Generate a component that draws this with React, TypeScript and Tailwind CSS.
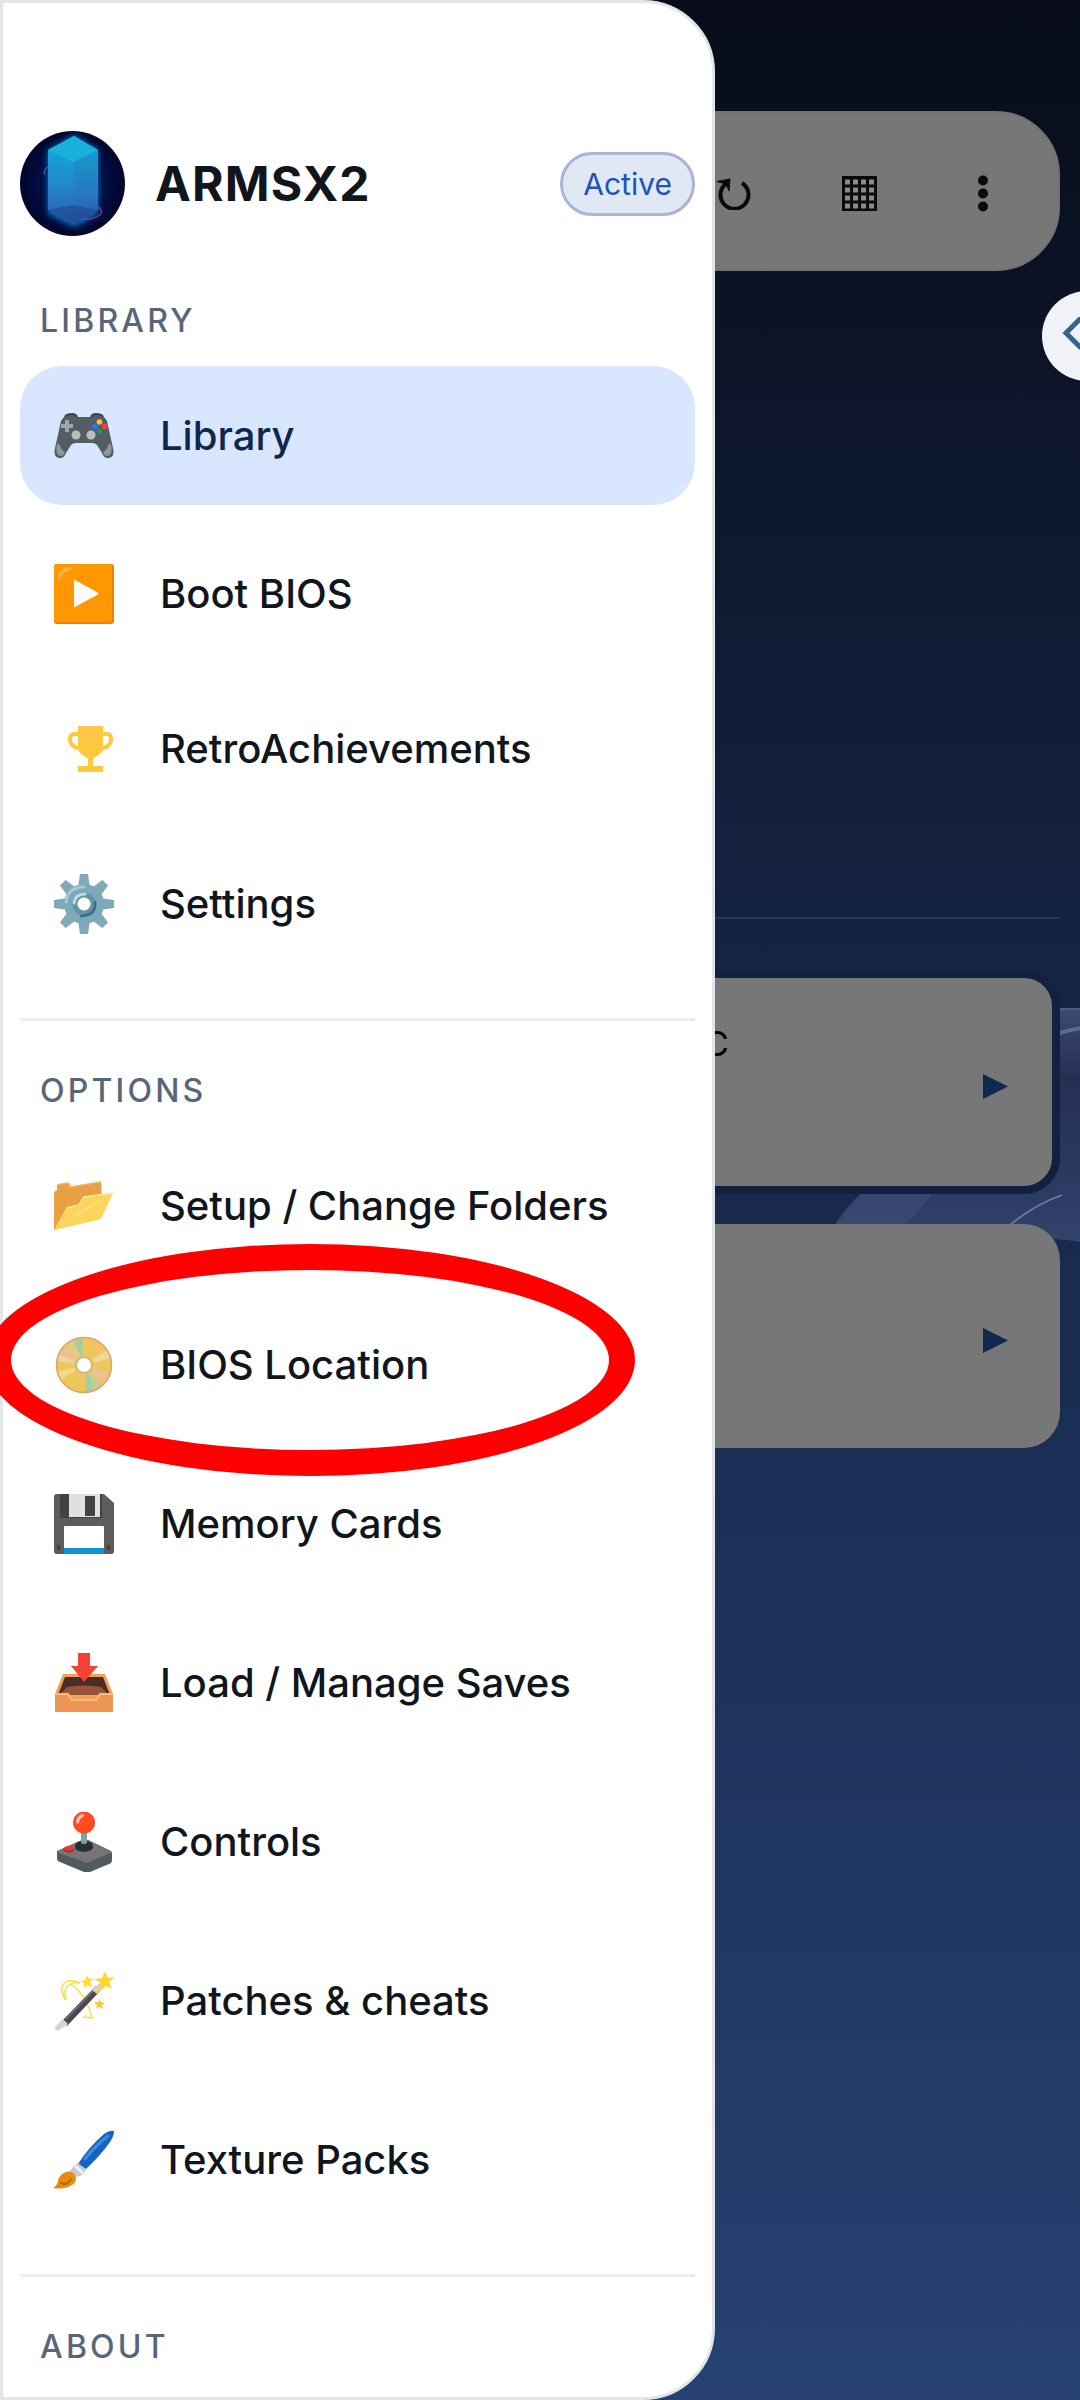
import type { ReactNode } from 'react';

function Icon({ children }: { children: ReactNode }) {
  return (
    <svg viewBox="0 0 60 60" className="size-[60px] shrink-0" aria-hidden="true">
      {children}
    </svg>
  );
}

const gamepad = (
  <Icon>
    <path d="M12 10q1-2 6-2 4 0 5 3h14q1-3 5-3 5 0 6 2 4 2 5 5l6 27q2 9-4 10-5 1-7-5l-5-8q-2-2-5-2H22q-3 0-5 2l-5 8q-2 6-7 5-6-1-4-10L7 15q1-3 5-5Z" fill="#545d63" />
    <path d="M11 11q1-3 7-3 4 0 5 3M37 11q1-3 5-3 6 0 7 3" fill="none" stroke="#3e464b" strokeWidth="2" />
    <path d="M3 38q2-1 3 2 1 4 5 6-1 4-5 4-5-2-3-12ZM57 38q-2-1-3 2-1 4-5 6 1 4 5 4 5-2 3-12Z" fill="#8f979c" />
    <path d="M11 14h4v4h4v4h-4v4h-4v-4H7v-4h4Z" fill="#a2a6a8" />
    <circle cx="22" cy="29" r="4.500" fill="#bdbdbd" />
    <circle cx="37" cy="29" r="4.500" fill="#bdbdbd" />
    <circle cx="45.500" cy="16" r="2.800" fill="#fbc02d" />
    <circle cx="41" cy="20.500" r="2.800" fill="#2979ff" />
    <circle cx="50.500" cy="20.500" r="2.800" fill="#f44336" />
    <circle cx="45.500" cy="25" r="2.600" fill="#0f9d58" />
  </Icon>
);

const play = (
  <Icon>
    <rect width="60" height="60" rx="3" fill="#f57c00" />
    <rect width="58" height="58" rx="3" fill="#ff9800" />
    <path d="M4 14Q4 4 15 3q4 0 2 3-9 1-11 10-2 1-2-2Z" fill="#ffbd52" opacity=".8" />
    <path d="M20 15.500 43 28q2 1.500 0 3L20 43.500Z" fill="#fafafa" />
  </Icon>
);

const trophy = (
  <svg viewBox="0 0 45 46" className="ml-[14px] mr-px h-[46px] w-[45px] shrink-0" aria-hidden="true">
    <path d="M11 8H6Q2 8 2 13q0 8 11 10M34 8h5q4 0 4 5 0 8-11 10" fill="none" stroke="#ffc93c" strokeWidth="4" />
    <path d="M10 0h25v20q0 7-6 10-4 2-4 4v6h10v6H10v-6h10v-6q0-2-4-4-6-3-6-10Z" fill="#ffc93c" />
    <path d="M13 0h19v15H13Z" fill="#ffc44a" />
  </svg>
);

const gear = (
  <Icon>
    <g fill="#82a9b8">
      <path d="m26 0h8l2 14H24ZM26 60h8l2-14H24ZM0 26v8l14 2V24ZM60 26v8l-14 2V24Z" />
      <path d="m26 0h8l2 14H24ZM26 60h8l2-14H24ZM0 26v8l14 2V24ZM60 26v8l-14 2V24Z" transform="rotate(45 30 30)" />
    </g>
    <path d="M30 10a20 20 0 1 0 .1 0ZM30 24a6 6 0 1 1-.1 0Z" fill="#7ba9ba" fillRule="evenodd" />
    <path d="M12 28Q14 13 30 13" fill="none" stroke="#a5cbd5" strokeWidth="3" strokeLinecap="round" />
    <circle cx="30" cy="30" r="9" fill="none" stroke="#6494a6" strokeWidth="5" />
    <path d="M20 29q1-9 11-9" fill="none" stroke="#bddde4" strokeWidth="3" strokeLinecap="round" />
    <path d="M41 28q2 13-14 14" fill="none" stroke="#386f82" strokeWidth="2.500" strokeLinecap="round" />
    <circle cx="30" cy="30" r="6.500" fill="#fff" />
  </Icon>
);

const folder = (
  <Icon>
    <path d="M0 18q0-3 3-4V9l10-2q3 0 3 4l31-5 1 16L12 50 0 54Z" fill="#e7a043" />
    <path d="M3 9 13 7q3 0 3 4l31-5" fill="none" stroke="#f0b75e" strokeWidth="1.500" />
    <path d="m0 54 12-22 13-3 5-8 29-4-10 22q-1 4-5 5Z" fill="#fbd55c" />
    <path d="m12 32 13-3 5-8 29-4" fill="none" stroke="#ffe998" strokeWidth="1.500" />
    <path d="m20 40 30-17" stroke="#ffe27c" strokeWidth="3" opacity=".6" />
  </Icon>
);

const disc = (
  <Icon>
    <circle cx="30" cy="30" r="28" fill="#eec75b" />
    <g opacity=".85">
      <path d="M30 30 12 9l8-5Z" fill="#dcd08a" />
      <path d="M30 30 19 4l9-2Z" fill="#9bcdab" />
      <path d="M30 30 3 22l8-12Z" fill="#f0bf9b" />
      <path d="M30 30 2 26l2-7Z" fill="#ead6ac" />
      <path d="m30 30 18 21-8 5Z" fill="#b5d2a0" />
      <path d="m30 30 11 26-9 2Z" fill="#9bcdab" />
      <path d="m30 30 27 8-7 11Z" fill="#f0bf9b" />
      <path d="m30 30 28-7-5-8Z" fill="#ecdba7" />
      <path d="m30 30-27 7 4 8Z" fill="#f5dd88" />
    </g>
    <circle cx="30" cy="30" r="27.500" fill="none" stroke="#dfa368" strokeWidth="1.500" />
    <circle cx="30" cy="30" r="9.500" fill="#d8b464" stroke="#e6c480" strokeWidth="1.500" />
    <circle cx="30" cy="30" r="7" fill="#fff" />
  </Icon>
);

const floppy = (
  <Icon>
    <path d="M3 0h47l10 9v48q0 3-3 3H3q-3 0-3-3V3q0-3 3-3Z" fill="#5c5c5c" />
    <path d="M6 0h42v24H6Z" fill="#424242" />
    <path d="M15 0h31v23H15Z" fill="#e0e0e0" />
    <path d="M31 2h10v20H31Z" fill="#424242" />
    <path d="M10 33q0-1 1-1h38q1 0 1 1v22H10Z" fill="#fff" />
    <path d="M10 54h40v6H10Z" fill="#0f92d6" />
    <path d="M3 51h3v5H3ZM53 51h3v5h-3Z" fill="#424242" />
  </Icon>
);

const inbox = (
  <Icon>
    <path d="M9 21h42l8 20v18H1V41Z" fill="#efa255" />
    <path d="M11 24h38l7 18H4Z" fill="#4b2c27" />
    <path d="M13 34q17-3 34 0l8 8H5Z" fill="#965539" />
    <path d="M1 41h13l4 6h24l4-6h13v18H1Z" fill="#ee9656" />
    <path d="M1 41h13l4 6h24l4-6h13" fill="none" stroke="#ffbd73" strokeWidth="2" />
    <path d="M24 0h12v13h8L30 29 17 13h7Z" fill="#f44336" />
  </Icon>
);

const joystick = (
  <Icon>
    <path d="m3 39 25-11q3-1 6 0l23 11q1 1 1 3v6q0 3-3 4L36 60q-3 1-6 0L6 50q-3-1-3-4Z" fill="#515b5f" />
    <path d="m4 39 25-11q2-1 5 0l22 11q2 1 0 2L35 50q-3 1-5 0L5 41q-2-1-1-2Z" fill="#757575" />
    <ellipse cx="30" cy="35" rx="9" ry="5" fill="#263035" />
    <path d="M22 31q8-5 16 0l1 4H21Z" fill="#263035" />
    <path d="M27 19h6v12q-3 2-6 0Z" fill="#75a5a4" />
    <circle cx="30" cy="10.500" r="11" fill="#ff4b20" />
    <path d="M22 10q0-6 6-8 3 0 1 3-4 2-4 6-2 2-3-1Z" fill="#ffc3b5" />
    <ellipse cx="15" cy="37.500" rx="5.500" ry="3" fill="#b71c1c" />
    <ellipse cx="15" cy="36.500" rx="5" ry="2.500" fill="#e53935" />
  </Icon>
);

const wand = (
  <Icon>
    <path d="M26 12Q12 6 8 16q-1 7 4 13Q9 18 15 14q4-3 11-2ZM17 13q16 12 21 34l-9-1" fill="none" stroke="#f5e23b" strokeWidth="1.500" />
    <path d="m8 50 34-35 5 4-34 36Z" fill="#4b4852" />
    <path d="m12 48 31-32" stroke="#77727d" strokeWidth="1.500" />
    <path d="m1 56 8-8 5 5-9 6q-4 2-4-3Z" fill="#d4d2d8" />
    <path d="m38 19 10-9 4 4-9 9Z" fill="#e5d0a4" />
    <path d="m51 0 3 7 7-1-6 5 3 7-7-3-5 5 1-8-7-4 8-1Z" fill="#fdd835" />
    <path d="m33 4 2 4 5-1-4 4 2 5-5-2-3 3 0-5-4-2 5-1Z" fill="#fbdc35" />
    <path d="m46 28 1 3 4 1-3 2 1 4-4-2-3 1 1-3-3-3 4 0Z" fill="#f9ca38" />
  </Icon>
);

const brush = (
  <Icon>
    <path d="M24 34Q34 18 50 4q6-4 10-3 0 5-4 11Q46 26 32 39Z" fill="#1565c0" />
    <path d="M31 29Q42 15 54 6" fill="none" stroke="#3f8be0" strokeWidth="3" strokeLinecap="round" />
    <path d="m24 33 8 7q-4 6-9 7l-8-5q4-6 9-9Z" fill="#c6c9d3" />
    <path d="m21 36 8 7" stroke="#eef0f4" strokeWidth="3" />
    <path d="M12 42q5-2 9 3 3 6-3 10-8 5-19 3 5-3 5-8 2-6 8-8Z" fill="#e88a0c" />
    <path d="M7 53q6 3 10-4" fill="none" stroke="#bb650c" strokeWidth="2" strokeLinecap="round" />
  </Icon>
);

type Item = { label: string; icon: ReactNode };

const libraryItems: Item[] = [
  { label: 'Boot BIOS', icon: play },
  { label: 'RetroAchievements', icon: trophy },
  { label: 'Settings', icon: gear },
];

const optionItems: (Item & { circled?: boolean })[] = [
  { label: 'Setup / Change Folders', icon: folder },
  { label: 'BIOS Location', icon: disc, circled: true },
  { label: 'Memory Cards', icon: floppy },
  { label: 'Load / Manage Saves', icon: inbox },
  { label: 'Controls', icon: joystick },
  { label: 'Patches & cheats', icon: wand },
  { label: 'Texture Packs', icon: brush },
];

function SectionTitle({ children }: { children: ReactNode }) {
  return <h2 className="px-5 text-[32px] leading-10 font-medium tracking-widest text-[#596579]">{children}</h2>;
}

function Logo() {
  return (
    <svg viewBox="0 0 105 105" className="size-[105px] shrink-0" role="img" aria-label="ARMSX2 logo">
      <defs>
        <radialGradient id="disc">
          <stop offset="0" stopColor="#032b78" />
          <stop offset=".6" stopColor="#020d45" />
          <stop offset="1" stopColor="#01062a" />
        </radialGradient>
        <linearGradient id="left" x2="0" y2="1">
          <stop offset="0" stopColor="#10b0dc" />
          <stop offset=".6" stopColor="#2484ca" />
          <stop offset="1" stopColor="#2b5ba8" />
        </linearGradient>
        <linearGradient id="right" x2="0" y2="1">
          <stop offset="0" stopColor="#149aca" />
          <stop offset=".6" stopColor="#2878c2" />
          <stop offset="1" stopColor="#2857a2" />
        </linearGradient>
        <filter id="glow" x="-40%" y="-20%" width="180%" height="140%">
          <feGaussianBlur stdDeviation="3" />
        </filter>
      </defs>
      <circle cx="52.500" cy="52.500" r="52.500" fill="url(#disc)" />
      <path d="M54 4 78 19v64L54 96 28 83V19Z" fill="#0786d8" filter="url(#glow)" opacity=".85" />
      <path d="M54 5 78 19v60L54 92 28 79V19Z" fill="url(#left)" />
      <path d="M78 19v60L53 92V31Z" fill="url(#right)" />
      <path d="M54 5 78 19 53 31 28 19Z" fill="#19b0dc" />
      <path d="M28 79 53 74l25 5-24 13Z" fill="#1c3f88" opacity=".5" />
      <path d="M78 76q8 6-2 10-6 3-14 2" fill="none" stroke="#b128a8" strokeWidth="1.200" />
      <path d="M28 36q-6 4-3 8" fill="none" stroke="#3f6fc0" strokeWidth="1" />
    </svg>
  );
}

function MenuRow({ label, icon, active, className }: Item & { active?: boolean; className: string }) {
  return (
    <button
      type="button"
      aria-current={active ? 'page' : undefined}
      className={`flex w-full items-center gap-[46px] rounded-[42px] px-[34px] text-left text-[40px] leading-12 font-medium ${
        active ? 'bg-[#d9e6ff] text-[#0e2650]' : 'text-[#11151c]'
      } ${className}`}
    >
      {icon}
      <span>{label}</span>
    </button>
  );
}

function Drawer() {
  return (
    <aside className="z-10 col-start-1 row-start-1 w-[66.2%] rounded-r-[72px] border-3 border-[#e2e5ea] bg-white px-[17px] pt-32 pb-7">
      <header className="flex items-center">
        <Logo />
        <h1 className="ml-[30px] flex-1 text-[48px] leading-14 font-bold tracking-wide text-[#11151c]">ARMSX2</h1>
        <span className="rounded-[32px] border-3 border-[#a9b4d6] bg-[#e0e8f3] px-5 py-[9px] text-[30px] leading-10 text-[#2054b4]">
          Active
        </span>
      </header>

      <nav aria-label="Main">
        <section className="mt-[65px]">
          <SectionTitle>LIBRARY</SectionTitle>
          <ul className="mt-[25px] flex flex-col gap-[22px]">
            <li>
              <MenuRow label="Library" icon={gamepad} active className="h-[139px]" />
            </li>
            {libraryItems.map((item) => (
              <li key={item.label}>
                <MenuRow {...item} className="h-[133px]" />
              </li>
            ))}
          </ul>
        </section>

        <section className="mt-12 border-t-3 border-[#ebedef] pt-[50px]">
          <SectionTitle>OPTIONS</SectionTitle>
          <ul className="mt-[25px] flex flex-col gap-5">
            {optionItems.map(({ circled, ...item }) => (
              <li key={item.label} className="relative">
                <MenuRow {...item} className="h-[139px]" />
                {circled && (
                  <div className="pointer-events-none absolute -top-[51px] -left-[35px] h-[232px] w-[650px] rounded-[50%] border-26 border-[#ff0000]" />
                )}
              </li>
            ))}
          </ul>
        </section>

        <section className="mt-[45px] border-t-3 border-[#ebedef] pt-[50px]">
          <SectionTitle>ABOUT</SectionTitle>
        </section>
      </nav>
    </aside>
  );
}

function PlayMark() {
  return (
    <svg viewBox="0 0 25 25" className="mt-2 size-[25px]" aria-hidden="true">
      <path d="M0 0 25 12.500 0 25Z" fill="#10294f" />
    </svg>
  );
}

function Wallpaper() {
  return (
    <svg viewBox="0 0 260 240" className="absolute top-[1005px] right-0 h-[240px] w-[260px]" aria-hidden="true">
      <defs>
        <linearGradient id="ribbon" x2="0" y2="1">
          <stop offset="0" stopColor="#3b4a70" />
          <stop offset=".3" stopColor="#252f54" />
          <stop offset=".7" stopColor="#2a3960" />
          <stop offset="1" stopColor="#32436c" />
        </linearGradient>
      </defs>
      <path d="M260 4h-20q-40 4-90 80-40 55-95 90-20 20-50 60h200q30-2 55 3Z" fill="url(#ribbon)" />
      <path d="M52 180q50-20 70-10-14 36-60 66H6q16-35 46-56Z" fill="#3f4f74" opacity=".6" />
      <path d="M240 4h20" fill="none" stroke="#4d5d82" strokeWidth="2" />
      <path d="M238 29q10-4 24-6" fill="none" stroke="#5b6b8f" strokeWidth="4" />
      <path d="M190 220q24-20 52-30" fill="none" stroke="#6d7fa2" strokeWidth="1.500" />
    </svg>
  );
}

function LibraryScreen() {
  return (
    <main className="relative col-start-1 row-start-1 bg-linear-to-b from-[#070c18] via-[#17274a] via-45% to-[#264272] pt-[111px]">
      <Wallpaper />
      <div className="relative px-5">
        <div className="flex h-40 items-center justify-end gap-[91px] rounded-[64px] border-2 border-[#6f7278] bg-[#777777] pt-1 pr-[70px] text-black">
          <button type="button" aria-label="Refresh">
            <svg viewBox="0 0 34 34" className="size-[34px]" fill="none" stroke="#080b0e" strokeWidth="4">
              <path d="M25 7A14 14 0 1 1 10 7" />
              <path d="M0 5.500 13 3 12 15 9 8Z" fill="#080b0e" strokeWidth="1" />
            </svg>
          </button>
          <button type="button" aria-label="Grid view">
            <svg viewBox="0 0 35 35" className="size-[35px]">
              <path d="M0 0h35v35H0Z" fill="#080b0e" />
              <path d="M3 6h29M3 14h29M3 22h29M3 30h29" stroke="#8a8a8a" strokeWidth="5" strokeDasharray="5 3" />
            </svg>
          </button>
          <button type="button" aria-label="More options" className="ml-[10px]">
            <svg viewBox="0 0 10 37" className="h-[37px] w-[10px]" fill="#080b0e">
              <circle cx="5" cy="5.500" r="5" />
              <circle cx="5" cy="18.500" r="5" />
              <circle cx="5" cy="31.500" r="5" />
            </svg>
          </button>
        </div>
      </div>

      <button
        type="button"
        aria-label="Open panel"
        className="relative -mr-[52px] mt-5 ml-auto flex size-[90px] items-center rounded-full bg-[#f0f2f7] pb-1 pl-5"
      >
        <svg viewBox="0 0 20 34" className="h-[34px] w-5" fill="none" stroke="#34648e" strokeWidth="5">
          <path d="M19 1 4 16l15 15" />
        </svg>
      </button>

      <div className="relative mt-[536px] px-5">
        <hr className="border-t-2 border-[#26365a]" />
        <ul className="mt-[51px] flex flex-col gap-[30px]">
          <li className="flex h-56 items-center justify-between rounded-[36px] border-8 border-[#12213f] bg-[#777777] pr-11 pl-[676px]">
            <span className="self-start pt-[46px] text-[34px] leading-10 text-black">C</span>
            <PlayMark />
          </li>
          <li className="flex h-56 items-center justify-end rounded-[36px] bg-[#777777] pr-[52px]">
            <PlayMark />
          </li>
        </ul>
      </div>
    </main>
  );
}

export default function App() {
  return (
    <div className="grid min-h-screen grid-cols-1 overflow-hidden bg-[#070c18] font-['Inter',sans-serif]">
      <LibraryScreen />
      <Drawer />
    </div>
  );
}
